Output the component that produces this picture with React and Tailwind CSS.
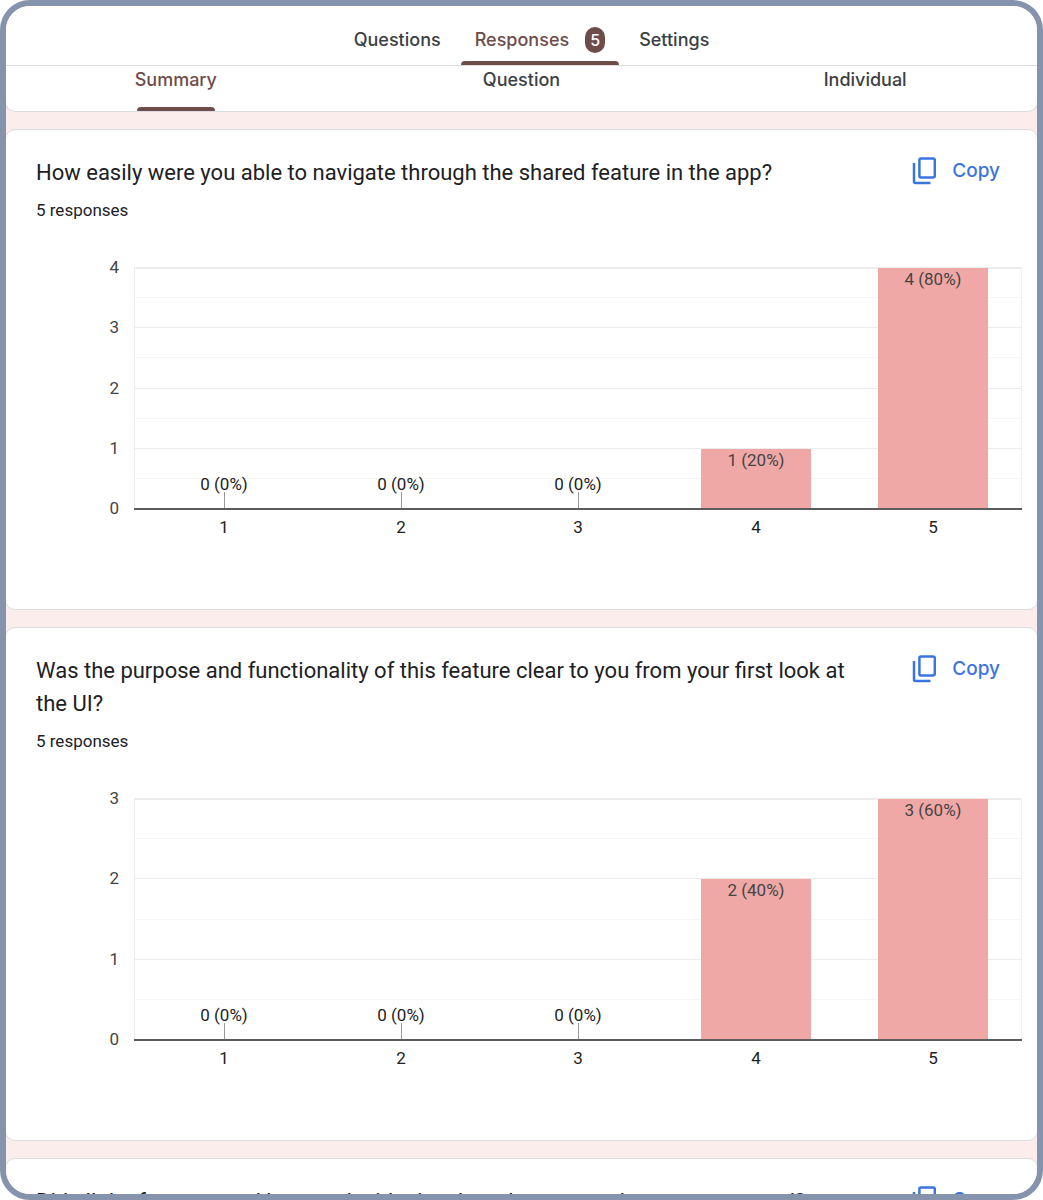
import React from "react";

const PLOT = { left: 129, right: 1016, top: 48, bottom: 289 };
const COLUMN_CENTERS = [218, 395, 572, 750, 927];
const BAR_WIDTH = 110;

function CopyIcon() {
  return (
    <svg width="24" height="28" viewBox="0 0 24 28" fill="none" stroke="currentColor" strokeWidth="2.5" aria-hidden="true">
      <rect x="7.4" y="1.4" width="15.4" height="19" rx="1.6" />
      <path d="M2 6v18.6q0 1.4 1.4 1.4H18.5" />
    </svg>
  );
}

function BarChart({ max, counts, total, label }) {
  const step = (PLOT.bottom - PLOT.top) / max;
  const yOf = (v) => Math.round(PLOT.bottom - v * step);
  const majors = Array.from({ length: max + 1 }, (_, i) => i);
  return (
    <svg viewBox="0 0 1031 389" className="block w-full" role="img" aria-label={label} fontSize="17">
      {majors.slice(0, -1).map((v) => (
        <rect key={v} x={PLOT.left} y={yOf(v + 0.5) - 1} width={PLOT.right - PLOT.left} height="1" fill="#f6f6f6" />
      ))}
      {majors.slice(1).map((v) => (
        <rect key={v} x={PLOT.left} y={yOf(v) - 1} width={PLOT.right - PLOT.left} height={v === max ? 2 : 1} fill="#ececec" />
      ))}
      <rect x={PLOT.left - 1} y={PLOT.top - 1} width="1" height={PLOT.bottom - PLOT.top} fill="#ececec" />
      <rect x={PLOT.right - 1} y={PLOT.top - 1} width="1" height={PLOT.bottom - PLOT.top} fill="#f0f0f0" />
      {majors.map((v) => (
        <text key={v} x="113" y={yOf(v) + 5} textAnchor="end" fill="#444444">{v}</text>
      ))}
      {counts.map((count, i) => {
        const x = COLUMN_CENTERS[i];
        const text = `${count} (${Math.round((count / total) * 100)}%)`;
        return (
          <g key={i}>
            {count > 0 ? (
              <rect x={x - BAR_WIDTH / 2} y={yOf(count)} width={BAR_WIDTH} height={PLOT.bottom - yOf(count)} fill="#efa8a6" />
            ) : (
              <rect x={x} y={PLOT.bottom - 17} width="1" height="17" fill="#999999" />
            )}
            <text x={x} y={count > 0 ? yOf(count) + 17 : PLOT.bottom - 19} textAnchor="middle" fill={count > 0 ? "#444444" : "#222222"}>
              {text}
            </text>
            <text x={x} y={PLOT.bottom + 24} textAnchor="middle" fill="#222222">{i + 1}</text>
          </g>
        );
      })}
      <rect x={PLOT.left - 1} y={PLOT.bottom - 1} width={PLOT.right - PLOT.left + 1} height="2" fill="#5c5c5c" />
    </svg>
  );
}

function QuestionCard({ title, max, counts }) {
  return (
    <section className="-mx-px shrink-0 rounded-[10px] border border-[#dadce0] bg-white font-[Roboto,sans-serif] font-normal text-[#202124]">
      <div className="flex items-start justify-between pt-[26px] pr-[37px] pl-[30px]">
        <div className="max-w-[840px]">
          <h2 className="text-[22px] leading-[33px]">{title}</h2>
          <p className="mt-[11px] text-[17px] leading-5">5 responses</p>
        </div>
        <button type="button" className="flex items-center gap-4 pt-px font-[Inter,sans-serif] text-[19px] leading-7 font-medium text-[#3b74e0]">
          <CopyIcon />
          Copy
        </button>
      </div>
      <BarChart max={max} counts={counts} total={5} label={title} />
    </section>
  );
}

export default function App() {
  return (
    <div className="h-screen bg-white">
      <div className="flex h-full flex-col overflow-hidden rounded-[30px] border-6 border-[#8594ac] bg-[#fbedeb] font-[Inter,sans-serif] text-lg font-medium text-[#3c4043]">
        <header className="shrink-0 border-b border-[#dadce0] bg-white">
          <nav className="flex h-[59px] items-stretch justify-center gap-5 pl-5">
            <button type="button" className="pt-2">Questions</button>
            <button type="button" className="flex flex-col text-[#6d4c4a]">
              <span className="flex grow items-center gap-4 px-[14px] pt-3">
                Responses
                <span className="flex h-[26px] w-5 items-center justify-center rounded-full bg-[#6d4c4a] text-base text-white">5</span>
              </span>
              <span className="h-1 self-stretch rounded-t bg-[#6d4c4a]" />
            </button>
            <button type="button" className="pt-2">Settings</button>
          </nav>
        </header>
        <div className="-mx-px mb-[17px] grid h-[46px] shrink-0 grid-cols-3 rounded-b-[10px] border border-t-0 border-[#dadce0] bg-white">
          <button type="button" className="flex flex-col items-center justify-between pr-1 text-[#6d4c4a]">
            <span className="leading-7">Summary</span>
            <span className="h-1 w-[78px] rounded-t bg-[#6d4c4a]" />
          </button>
          <button type="button" className="flex justify-center leading-7">Question</button>
          <button type="button" className="flex justify-center leading-7">Individual</button>
        </div>
        <main className="flex flex-col gap-[17px]">
          <QuestionCard
            title="How easily were you able to navigate through the shared feature in the app?"
            max={4}
            counts={[0, 0, 0, 1, 4]}
          />
          <QuestionCard
            title="Was the purpose and functionality of this feature clear to you from your first look at the UI?"
            max={3}
            counts={[0, 0, 0, 2, 3]}
          />
          <QuestionCard
            title="Did all the features and buttons inside the shared space work as you expected?"
            max={4}
            counts={[0, 0, 0, 1, 4]}
          />
        </main>
      </div>
    </div>
  );
}
